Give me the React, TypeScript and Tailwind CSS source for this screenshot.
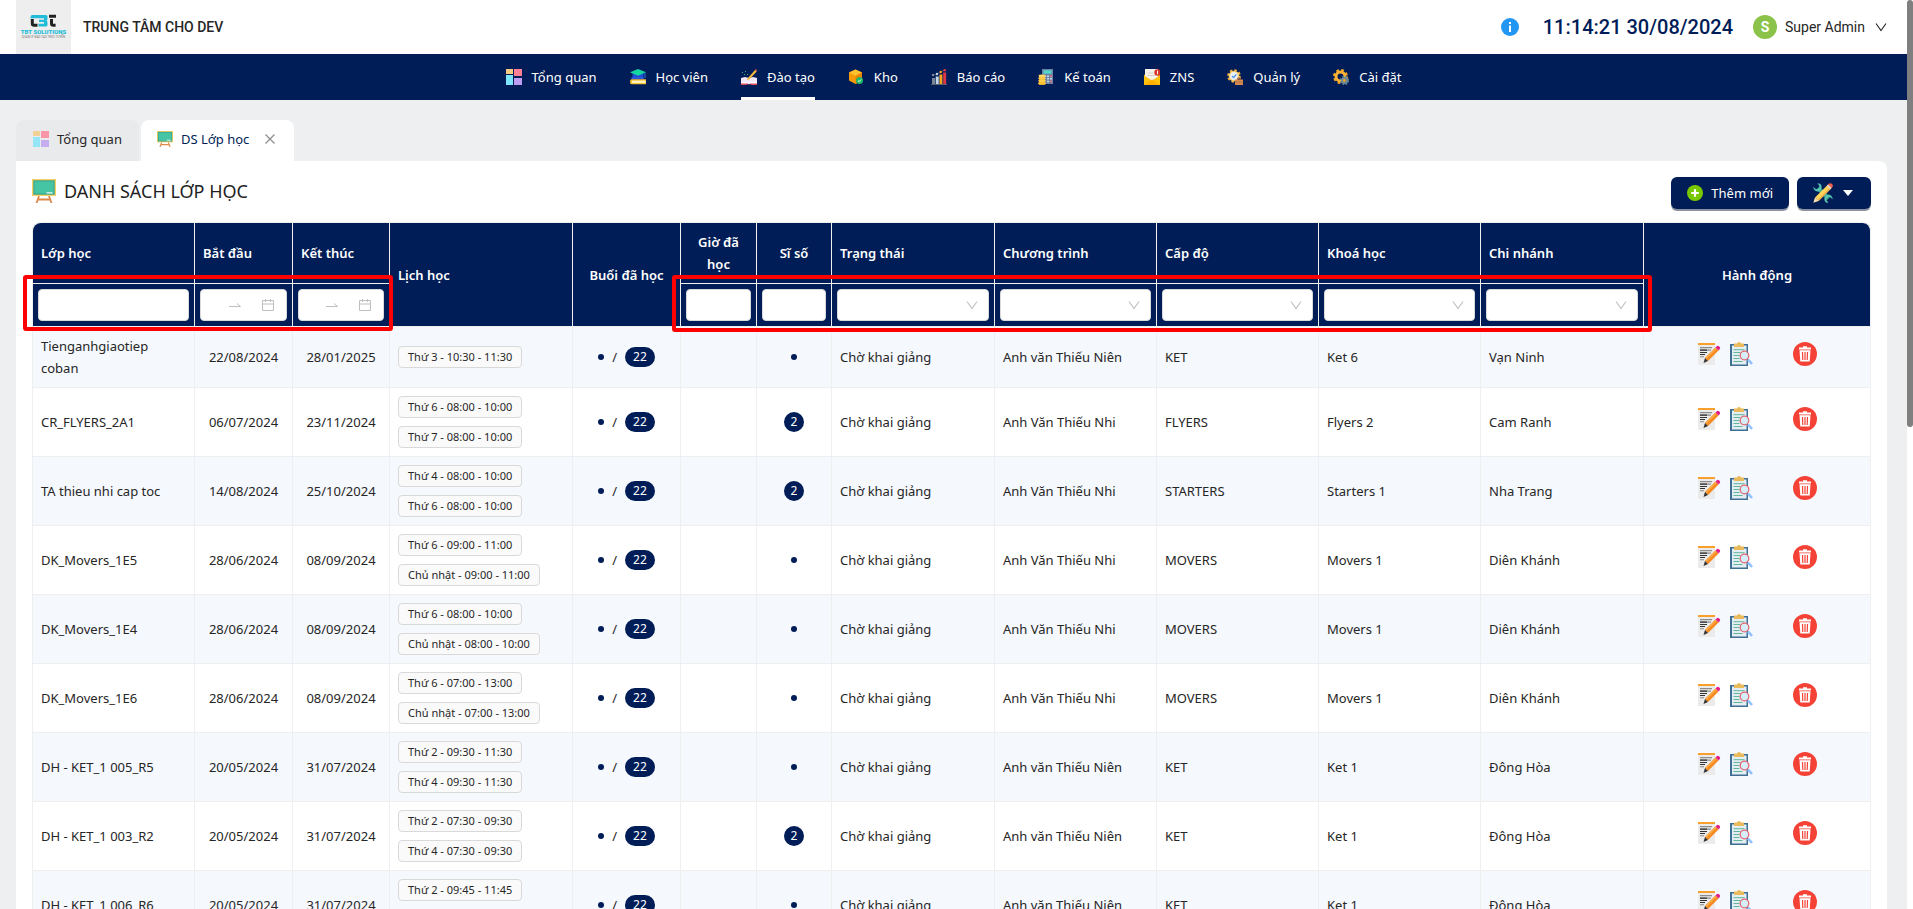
import React, { ReactNode } from "react";

type ClassRow = {
  name: string;
  start: string;
  end: string;
  schedule: string[];
  students?: number;
  program: string;
  level: string;
  course: string;
  branch: string;
};

const rows: ClassRow[] = [
  {
    name: "Tienganhgiaotiep coban",
    start: "22/08/2024",
    end: "28/01/2025",
    schedule: ["Thứ 3 - 10:30 - 11:30"],
    program: "Anh văn Thiếu Niên",
    level: "KET",
    course: "Ket 6",
    branch: "Vạn Ninh",
  },
  {
    name: "CR_FLYERS_2A1",
    start: "06/07/2024",
    end: "23/11/2024",
    schedule: ["Thứ 6 - 08:00 - 10:00", "Thứ 7 - 08:00 - 10:00"],
    students: 2,
    program: "Anh Văn Thiếu Nhi",
    level: "FLYERS",
    course: "Flyers 2",
    branch: "Cam Ranh",
  },
  {
    name: "TA thieu nhi cap toc",
    start: "14/08/2024",
    end: "25/10/2024",
    schedule: ["Thứ 4 - 08:00 - 10:00", "Thứ 6 - 08:00 - 10:00"],
    students: 2,
    program: "Anh Văn Thiếu Nhi",
    level: "STARTERS",
    course: "Starters 1",
    branch: "Nha Trang",
  },
  {
    name: "DK_Movers_1E5",
    start: "28/06/2024",
    end: "08/09/2024",
    schedule: ["Thứ 6 - 09:00 - 11:00", "Chủ nhật - 09:00 - 11:00"],
    program: "Anh Văn Thiếu Nhi",
    level: "MOVERS",
    course: "Movers 1",
    branch: "Diên Khánh",
  },
  {
    name: "DK_Movers_1E4",
    start: "28/06/2024",
    end: "08/09/2024",
    schedule: ["Thứ 6 - 08:00 - 10:00", "Chủ nhật - 08:00 - 10:00"],
    program: "Anh Văn Thiếu Nhi",
    level: "MOVERS",
    course: "Movers 1",
    branch: "Diên Khánh",
  },
  {
    name: "DK_Movers_1E6",
    start: "28/06/2024",
    end: "08/09/2024",
    schedule: ["Thứ 6 - 07:00 - 13:00", "Chủ nhật - 07:00 - 13:00"],
    program: "Anh Văn Thiếu Nhi",
    level: "MOVERS",
    course: "Movers 1",
    branch: "Diên Khánh",
  },
  {
    name: "DH - KET_1 005_R5",
    start: "20/05/2024",
    end: "31/07/2024",
    schedule: ["Thứ 2 - 09:30 - 11:30", "Thứ 4 - 09:30 - 11:30"],
    program: "Anh văn Thiếu Niên",
    level: "KET",
    course: "Ket 1",
    branch: "Đông Hòa",
  },
  {
    name: "DH - KET_1 003_R2",
    start: "20/05/2024",
    end: "31/07/2024",
    schedule: ["Thứ 2 - 07:30 - 09:30", "Thứ 4 - 07:30 - 09:30"],
    students: 2,
    program: "Anh văn Thiếu Niên",
    level: "KET",
    course: "Ket 1",
    branch: "Đông Hòa",
  },
  {
    name: "DH - KET_1 006_R6",
    start: "20/05/2024",
    end: "31/07/2024",
    schedule: ["Thứ 2 - 09:45 - 11:45", "Thứ 4 - 09:45 - 11:45"],
    program: "Anh văn Thiếu Niên",
    level: "KET",
    course: "Ket 1",
    branch: "Đông Hòa",
  },
];

function App() {
  return (
    <div className="flex h-screen overflow-hidden bg-[#eeeff1] font-['Noto_Sans','Open_Sans',sans-serif] text-[13px] leading-[22px] text-[#262626]">
      <div className="flex min-w-0 flex-1 flex-col">
        <TopBar />
        <NavBar />
        <main className="min-h-0 flex-1 overflow-hidden px-4 pt-5 pr-5">
          <PageTabs />
          <ClassList />
        </main>
      </div>
      <div className="w-[6px] shrink-0 bg-white">
        <div className="h-[47%] rounded-full bg-[#7f7f7f]"></div>
      </div>
    </div>
  );
}

export default App;

const TopBar = () => {
  return (
    <header className="flex h-[54px] shrink-0 items-center bg-white pr-5 pl-4 font-[Roboto,sans-serif]">
      <Logo />
      <p className="ml-3 text-sm font-medium">TRUNG TÂM CHO DEV</p>
      <div className="ml-auto flex items-center">
        <button type="button" aria-label="Thông tin">
          <InfoIcon />
        </button>
        <p className="ml-6 text-xl font-medium text-[#001d57]">
          11:14:21 30/08/2024
        </p>
        <button type="button" className="ml-5 flex items-center">
          <span className="flex size-6 items-center justify-center rounded-full bg-[#8bc34a] text-sm font-bold text-white">
            S
          </span>
          <span className="mr-[10px] ml-2 text-sm">Super Admin</span>
          <ChevronDown className="size-3 text-[#262626]" />
        </button>
      </div>
    </header>
  );
};

const NavBar = () => {
  return (
    <nav className="flex h-[46px] shrink-0 justify-center gap-[33px] bg-[#001d57] text-white">
      <NavItem title="Tổng quan" icon={<DashboardIcon />} />
      <NavItem title="Học viên" icon={<StudentIcon />} />
      <NavItem title="Đào tạo" icon={<TrainingIcon />} active />
      <NavItem title="Kho" icon={<StockIcon />} />
      <NavItem title="Báo cáo" icon={<ReportIcon />} />
      <NavItem title="Kế toán" icon={<AccountingIcon />} />
      <NavItem title="ZNS" icon={<MailIcon />} />
      <NavItem title="Quản lý" icon={<ManageIcon />} />
      <NavItem title="Cài đặt" icon={<SettingIcon />} />
    </nav>
  );
};

const NavItem = ({
  title,
  icon,
  active,
}: {
  title: string;
  icon: ReactNode;
  active?: boolean;
}) => {
  return (
    <a
      href="#"
      className={`flex items-center gap-[10px] border-y-[3px] border-t-transparent ${
        active ? "border-b-white" : "border-b-transparent"
      }`}
    >
      {icon}
      <span>{title}</span>
    </a>
  );
};

const PageTabs = () => {
  return (
    <div className="flex gap-[2px]">
      <a
        href="#"
        className="flex h-[41px] items-center gap-2 rounded-t-lg bg-[#e9eaec] px-[17px] pb-[3px]"
      >
        <span className="opacity-80">
          <DashboardIcon />
        </span>
        <span>Tổng quan</span>
      </a>
      <div className="flex h-[41px] items-center rounded-t-lg bg-white pr-[19px] pb-[3px] pl-4">
        <a href="#" className="flex items-center gap-2 text-[#001d57]">
          <BoardIcon className="size-4" />
          <span>DS Lớp học</span>
        </a>
        <button type="button" aria-label="Đóng" className="ml-4">
          <svg viewBox="0 0 10 10" className="size-[10px]">
            <path d="M.5.5l9 9M9.5.5l-9 9" stroke="#8c8c8c" strokeWidth="1.2" />
          </svg>
        </button>
      </div>
    </div>
  );
};

const ClassList = () => {
  return (
    <section className="rounded-tr-lg bg-white p-4">
      <div className="flex items-start justify-between">
        <div className="flex items-center gap-2 pt-[2px]">
          <BoardIcon className="size-6" />
          <h1 className="text-lg leading-6 text-[#1f1f1f]">
            DANH SÁCH LỚP HỌC
          </h1>
        </div>
        <div className="flex gap-2">
          <button
            type="button"
            className="flex h-8 items-center gap-2 rounded-md bg-[#001d57] px-4 text-white shadow-[0_2px_0_#8a909c]"
          >
            <PlusIcon />
            <span>Thêm mới</span>
          </button>
          <button
            type="button"
            aria-label="Công cụ"
            className="flex h-8 w-[74px] items-center gap-[10px] rounded-md bg-[#001d57] px-4 shadow-[0_2px_0_#8a909c]"
          >
            <ToolsIcon />
            <svg viewBox="0 0 10 6" className="h-[6px] w-[10px]">
              <path d="M0 0h10L5 6z" fill="#fff" />
            </svg>
          </button>
        </div>
      </div>
      <div className="relative mt-[13px]">
        <ClassTable />
        <div className="pointer-events-none absolute top-[53px] -left-[9px] h-[56px] w-[20.1%] rounded-[3px] border-4 border-[#fe0000]"></div>
        <div className="pointer-events-none absolute top-[53px] left-[34.8%] h-[57px] w-[53.3%] rounded-[3px] border-4 border-[#fe0000]"></div>
      </div>
    </section>
  );
};

const ClassTable = () => {
  return (
    <table className="w-full table-fixed border-separate border-spacing-0 rounded-t-lg border-t border-l border-[#efeff0]">
      <colgroup>
        <col className="w-[162px]" />
        <col className="w-[98px]" />
        <col className="w-[97px]" />
        <col className="w-[183px]" />
        <col className="w-[108px]" />
        <col className="w-[76px]" />
        <col className="w-[75px]" />
        <col className="w-[163px]" />
        <col className="w-[162px]" />
        <col className="w-[162px]" />
        <col className="w-[162px]" />
        <col className="w-[163px]" />
        <col className="w-[227px]" />
      </colgroup>
      <thead>
        <tr className="h-[61px]">
          <HeadCell className="rounded-tl-lg text-left">Lớp học</HeadCell>
          <HeadCell className="text-left">Bắt đầu</HeadCell>
          <HeadCell className="text-left">Kết thúc</HeadCell>
          <HeadCell className="text-left" rowSpan={2}>
            Lịch học
          </HeadCell>
          <HeadCell className="text-center" rowSpan={2}>
            Buổi đã học
          </HeadCell>
          <HeadCell className="text-center">Giờ đã học</HeadCell>
          <HeadCell className="text-center">Sĩ số</HeadCell>
          <HeadCell className="text-left">Trạng thái</HeadCell>
          <HeadCell className="text-left">Chương trình</HeadCell>
          <HeadCell className="text-left">Cấp độ</HeadCell>
          <HeadCell className="text-left">Khoá học</HeadCell>
          <HeadCell className="text-left">Chi nhánh</HeadCell>
          <HeadCell className="rounded-tr-lg text-center" rowSpan={2}>
            Hành động
          </HeadCell>
        </tr>
        <tr>
          <FilterCell>
            <FilterInput label="Lớp học" />
          </FilterCell>
          <FilterCell>
            <FilterRange label="Bắt đầu" />
          </FilterCell>
          <FilterCell>
            <FilterRange label="Kết thúc" />
          </FilterCell>
          <FilterCell>
            <FilterInput label="Giờ đã học" />
          </FilterCell>
          <FilterCell>
            <FilterInput label="Sĩ số" />
          </FilterCell>
          <FilterCell>
            <FilterSelect label="Trạng thái" />
          </FilterCell>
          <FilterCell>
            <FilterSelect label="Chương trình" />
          </FilterCell>
          <FilterCell>
            <FilterSelect label="Cấp độ" />
          </FilterCell>
          <FilterCell>
            <FilterSelect label="Khoá học" />
          </FilterCell>
          <FilterCell>
            <FilterSelect label="Chi nhánh" />
          </FilterCell>
        </tr>
      </thead>
      <tbody>
        {rows.map((row) => (
          <tr key={row.name} className="odd:bg-[#f5f8fd]">
            <Cell>{row.name}</Cell>
            <Cell className="text-center">{row.start}</Cell>
            <Cell className="text-center">{row.end}</Cell>
            <Cell>
              <div className="flex flex-col items-start gap-2">
                {row.schedule.map((item) => (
                  <span
                    key={item}
                    className="rounded border border-[#d9d9d9] bg-[#fafafa] px-[9px] text-[11px] leading-5"
                  >
                    {item}
                  </span>
                ))}
              </div>
            </Cell>
            <Cell>
              <div className="flex items-center justify-center gap-2">
                <Dot />
                <span>/</span>
                <Count value={22} />
              </div>
            </Cell>
            <Cell />
            <Cell>
              <div className="flex items-center justify-center">
                {row.students ? <Count value={row.students} /> : <Dot />}
              </div>
            </Cell>
            <Cell>Chờ khai giảng</Cell>
            <Cell>{row.program}</Cell>
            <Cell>{row.level}</Cell>
            <Cell>{row.course}</Cell>
            <Cell>{row.branch}</Cell>
            <Cell>
              <div className="flex items-center justify-center pb-[6px]">
                <button type="button" aria-label="Sửa">
                  <EditIcon />
                </button>
                <button type="button" aria-label="Chi tiết" className="ml-2">
                  <DetailIcon />
                </button>
                <button type="button" aria-label="Xoá" className="ml-10">
                  <DeleteIcon />
                </button>
              </div>
            </Cell>
          </tr>
        ))}
      </tbody>
    </table>
  );
};

const HeadCell = ({
  className,
  rowSpan,
  children,
}: {
  className: string;
  rowSpan?: number;
  children: ReactNode;
}) => {
  return (
    <th
      rowSpan={rowSpan}
      className={`border-r border-b border-[#efeff0] bg-[#001d57] px-2 font-semibold text-white ${className}`}
    >
      {children}
    </th>
  );
};

const FilterCell = ({ children }: { children: ReactNode }) => {
  return (
    <th className="border-r border-b border-[#efeff0] bg-[#001d57] p-[5px] font-normal">
      {children}
    </th>
  );
};

const FilterInput = ({ label }: { label: string }) => {
  return (
    <input
      type="text"
      aria-label={label}
      className="block h-8 w-full rounded border border-[#d9d9d9] bg-white px-[11px] text-[#262626] outline-none"
    />
  );
};

const FilterRange = ({ label }: { label: string }) => {
  return (
    <div className="flex h-8 items-center rounded border border-[#d9d9d9] bg-white px-[11px] text-[#262626]">
      <input
        type="text"
        aria-label={`${label} từ ngày`}
        className="w-0 min-w-0 flex-1 outline-none"
      />
      <svg viewBox="0 0 12 12" className="mr-1 size-3 shrink-0">
        <path d="M0 7.5h11.5L8 4.5" fill="none" stroke="#bfbfbf" />
      </svg>
      <input
        type="text"
        aria-label={`${label} đến ngày`}
        className="w-0 min-w-0 flex-1 outline-none"
      />
      <svg viewBox="0 0 14 14" className="size-[14px] shrink-0">
        <path
          d="M1.5 2.5h11v10h-11zM1.5 6h11M4.5 1v3M9.5 1v3"
          fill="none"
          stroke="#bfbfbf"
        />
      </svg>
    </div>
  );
};

const FilterSelect = ({ label }: { label: string }) => {
  return (
    <div className="relative">
      <select
        aria-label={label}
        className="block h-8 w-full appearance-none rounded border border-[#d9d9d9] bg-white px-[11px] text-[#262626] outline-none"
      ></select>
      <ChevronDown className="pointer-events-none absolute top-[10px] right-[11px] size-3 text-[#bfbfbf]" />
    </div>
  );
};

const Cell = ({
  className = "",
  children,
}: {
  className?: string;
  children?: ReactNode;
}) => {
  return (
    <td className={`border-r border-b border-[#efeff0] p-2 ${className}`}>
      {children}
    </td>
  );
};

const Dot = () => {
  return <span className="size-[6px] rounded-full bg-[#001d57]"></span>;
};

const Count = ({ value }: { value: number }) => {
  return (
    <span
      className={`h-5 rounded-full bg-[#001d57] text-center text-xs leading-5 text-white ${
        value > 9 ? "px-2" : "w-5"
      }`}
    >
      {value}
    </span>
  );
};

const ChevronDown = ({ className }: { className: string }) => {
  return (
    <svg viewBox="0 0 12 12" className={className}>
      <path d="M1 2.5l5 7 5-7" fill="none" stroke="currentColor" strokeWidth="1.1" />
    </svg>
  );
};

const Logo = () => {
  return (
    <svg viewBox="0 0 55 54" className="h-[54px] w-[55px] bg-[#eeeeee]">
      <path d="M16.3 19v4.500q0 1.800 1.800 1.800h3.400" fill="none" stroke="#222" strokeWidth="3" />
      <path d="M15.500 15h14.500q1.500 0 1.500 1.500v2.500q0 1.500-1.200 1.800 1.200.3 1.200 1.800v2.500q0 1.500-1.500 1.500h-7.500v-2.800h5.500v-1.700h-5v-2.400h5v-1.500h-14z" fill="#22bcd8" />
      <path d="M33 16.300h7M35.500 19v4.500q0 1.800 1.800 1.800h2.300" fill="none" stroke="#222" strokeWidth="3" />
      <text
        x="27.500"
        y="34"
        textAnchor="middle"
        fontSize="6"
        fontWeight="900"
        fill="#22bcd8"
      >
        TBT SOLUTIONS
      </text>
      <text x="27.500" y="37.500" textAnchor="middle" fontSize="3" fill="#777">
        QUẢN LÝ ĐÀO TẠO TRỰC TUYẾN
      </text>
    </svg>
  );
};

const InfoIcon = () => {
  return (
    <svg viewBox="0 0 18 18" className="size-[18px]">
      <circle cx="9" cy="9" r="9" fill="#2196f3" />
      <path d="M8 4h2v2H8zM8 7.5h2V14H8z" fill="#fff" />
    </svg>
  );
};

const PlusIcon = () => {
  return (
    <svg viewBox="0 0 16 16" className="size-4">
      <circle cx="8" cy="8" r="8" fill="#78c800" />
      <path d="M8 4.2v7.6M4.2 8h7.6" stroke="#fff" strokeWidth="2.2" />
    </svg>
  );
};

const ToolsIcon = () => {
  return (
    <svg viewBox="0 0 20 20" className="size-5">
      <path d="M5 5l10.500 10.500" stroke="#37a895" strokeWidth="4" />
      <path
        d="M4.500.3Q8 .3 8.600 3.500q.2 1.800-.8 3.200L6.200 8.400Q3.800 9 2 7.600.3 6.200.3 3.800l2.700 2.400 2.700-.7.700-2.600z"
        fill="#56c2b0"
      />
      <path
        d="M15.500 19.900q-3.500 0-4.100-3.200-.2-1.800.8-3.200l1.600-1.700q2.400-.6 4.200.8 1.700 1.400 1.700 3.800L17 14l-2.700.7-.7 2.600z"
        fill="#56c2b0"
      />
      <path d="M2 14.500L14.300 2.200l3.600 3.600L5.600 18.100z" fill="#ffd45a" />
      <path d="M4.400 16.900L16.700 4.600l1.200 1.200L5.600 18.100z" fill="#f2b250" />
      <path d="M2 14.500L.3 19.800l5.300-1.700z" fill="#fbe3b6" />
      <path d="M14.900 1.600L16 .6q1.200-.9 2.400 0l1 1q1 1.200 0 2.500l-.9 1.100z" fill="#f0614c" />
      <path d="M13.900 2.600l1.100-1.100 3.600 3.600-1.100 1.100z" fill="#e8dcd8" />
    </svg>
  );
};

const BoardIcon = ({ className }: { className: string }) => {
  return (
    <svg viewBox="0 0 24 24" className={className}>
      <path d="M7 17L4.5 24M17 17l2.5 7M6 20.5h12" stroke="#e0894a" strokeWidth="1.8" />
      <path d="M0 0h24v17H0z" fill="#f7cf63" />
      <path d="M1.300 1.300h21.400v14.400H1.300z" fill="#36a58e" />
      <path d="M2.500 2.500h19v12h-19z" fill="#45c5a3" />
      <path d="M14.500 13h6v1.700h-6z" fill="#c6ece1" />
    </svg>
  );
};

const DashboardIcon = () => {
  return (
    <svg viewBox="0 0 16 16" className="size-4">
      <path d="M0 0h7v5H0z" fill="#f5cb82" />
      <path d="M8 0h8v7H8z" fill="#ff7f96" />
      <path d="M0 6h7v10H0z" fill="#7fe5fc" />
      <path d="M8 9h8v7H8z" fill="#be9ef2" />
    </svg>
  );
};

const StudentIcon = () => {
  return (
    <svg viewBox="0 0 16 16" className="size-4">
      <path d="M2.500 4h11v5.500h-11z" fill="#1f4fd1" />
      <path d="M8 0l8 3.300-8 3.400-8-3.400z" fill="#14d6a2" />
      <path d="M15 4v5" stroke="#2f74e8" strokeWidth="1" />
      <path d="M1.500 8h12v2.300h-12z" fill="#2f55dd" />
      <path d="M1.500 10.300H16v5H1.500Q0 15.300 0 12.800t1.500-2.500z" fill="#f7c531" />
      <path d="M2 11.700h13.500v2.200H2z" fill="#fff3c7" />
    </svg>
  );
};

const TrainingIcon = () => {
  return (
    <svg viewBox="0 0 16 16" className="size-4">
      <path d="M0 9l4-1 4 1 4-1 4 1v6H0z" fill="#f3e6f7" />
      <path d="M0 13.500l4 .8 4-.8 4 .8 4-.8V16h-5l-3-1-3 1H0z" fill="#e2475a" />
      <path d="M0 12.500h7l1 1 1-1h7v2H9l-1 1-1-1H0z" fill="#fbf5fd" />
      <path d="M6.500 9.500L14 1l1.700 1.500L8.300 10.500 6 11z" fill="#f6b73c" />
      <path d="M14 1l.9-1L16 1.300l-.6 1.300z" fill="#ef5a4c" />
      <path d="M1 3h1v1H1zM4 2h1v1H4zM3 5h1v1H3zM6 5h1v1H6z" fill="#3fae6a" />
    </svg>
  );
};

const StockIcon = () => {
  return (
    <svg viewBox="0 0 16 16" className="size-4">
      <path d="M7.500.5L14 3.500v8l-6.500 3.500L1 11.500v-8z" fill="#f79a0a" />
      <path d="M7.500.5L14 3.500 7.500 7 1 3.500z" fill="#ffc12e" />
      <path d="M7.500 7L14 3.500v8L7.500 15z" fill="#ee8300" />
      <circle cx="11.5" cy="11.5" r="3.5" fill="#1fb866" />
      <path d="M9.900 11.500l1.200 1.200 2-2.200" fill="none" stroke="#fff" strokeWidth="1" />
    </svg>
  );
};

const ReportIcon = () => {
  return (
    <svg viewBox="0 0 16 16" className="size-4">
      <path d="M1 9h3v6H1z" fill="#7d8794" />
      <path d="M4.700 7.500h3V15h-3z" fill="#c3d7e6" />
      <path d="M8.400 5.500h3V15h-3z" fill="#f5a623" />
      <path d="M12.200 3.500h3V15h-3z" fill="#dd3647" />
      <path d="M0 15h16v1H0z" fill="#59616e" />
      <path d="M2 6.500l4-1.500 3.500-2L13.500 1" fill="none" stroke="#5c6b80" strokeWidth=".8" />
      <circle cx="2" cy="6" r="1.2" fill="#7d8794" />
      <circle cx="6" cy="5" r="1.2" fill="#c3d7e6" />
      <circle cx="9.7" cy="3" r="1.2" fill="#f5a623" />
      <circle cx="13.700" cy="1.300" r="1.300" fill="#dd3647" />
    </svg>
  );
};

const AccountingIcon = () => {
  return (
    <svg viewBox="0 0 16 16" className="size-4">
      <path d="M4 0h11v15H4z" fill="#6c82a3" />
      <path d="M5.500 1.300h8v3.400h-8z" fill="#52d6cc" />
      <path d="M6 6.500h2v1.500H6zM9 6.500h2v1.500H9zM9 9h2v1.500H9zM9 11.700h2v1.500H9zM12 9h2v1.500h-2z" fill="#c9d5e8" />
      <path d="M12 6.500h2v1.500h-2zM12 11.700h2v1.500h-2z" fill="#ef6f7c" />
      <path d="M1 6.500h6v9H1z" fill="#f3a72f" />
      <ellipse cx="4" cy="6.800" rx="3.500" ry="1.400" fill="#ffd766" />
      <ellipse cx="4" cy="9.300" rx="3.800" ry="1.200" fill="#ffcd4a" />
      <ellipse cx="4" cy="11.800" rx="3.800" ry="1.200" fill="#ffcd4a" />
      <ellipse cx="4" cy="14.400" rx="4" ry="1.300" fill="#ffc235" />
    </svg>
  );
};

const MailIcon = () => {
  return (
    <svg viewBox="0 0 16 16" className="size-4">
      <path d="M0 6l3-2h10l3 2v10H0z" fill="#f5a500" />
      <path d="M1 0h13v13H1z" fill="#f6f1ea" />
      <path d="M3.500 4h6M3.500 6.500h8" stroke="#d6d0ca" strokeWidth="1" />
      <path d="M0 6.500l8 5 8-5V16H0z" fill="#ffc20e" />
      <path d="M0 16l8-5.500 8 5.500z" fill="#ffb000" />
      <circle cx="13.500" cy="3.500" r="3.200" fill="#d8362a" />
      <path d="M13.500 1.700v3.600" stroke="#fff" strokeWidth="1" />
    </svg>
  );
};

const ManageIcon = () => {
  return (
    <svg viewBox="0 0 16 16" className="size-4">
      <circle cx="7" cy="7" r="5.800" fill="none" stroke="#f3b33d" strokeWidth="2" strokeDasharray="2.500 2" />
      <circle cx="7" cy="7" r="5.300" fill="#f9cd6b" />
      <circle cx="7" cy="7" r="3.900" fill="#e8f2fb" />
      <path d="M5 7l1.700 1.700L9.300 5.300" fill="none" stroke="#4a8fe0" strokeWidth="1.200" />
      <path d="M8 10.500h8V16H8z" fill="#d58a52" />
      <path d="M10.500 10.500V9h3v1.500" fill="none" stroke="#a9653a" strokeWidth="1" />
      <path d="M8 12.700h8v.7H8z" fill="#a9653a" />
    </svg>
  );
};

const SettingIcon = () => {
  return (
    <svg viewBox="0 0 16 16" className="size-4">
      <circle cx="7.500" cy="7.500" r="6.500" fill="none" stroke="#f5a623" strokeWidth="2" strokeDasharray="2.800 2.300" />
      <circle cx="7.500" cy="7.500" r="4.500" fill="none" stroke="#f9b233" strokeWidth="3" />
      <circle cx="11.500" cy="11.500" r="4" fill="none" stroke="#5f7d8c" strokeWidth="1.400" strokeDasharray="1.800 1.400" />
      <circle cx="11.500" cy="11.500" r="2.400" fill="none" stroke="#6c8b99" strokeWidth="2.400" />
      <circle cx="11.500" cy="11.500" r="1.200" fill="#f5a623" />
    </svg>
  );
};

const EditIcon = () => {
  return (
    <svg viewBox="0 0 24 24" className="size-6">
      <path d="M1 1h17v22H1z" fill="#ebebeb" />
      <path d="M1 1h17v2H1z" fill="#f9a02c" />
      <path d="M3 5.700h12M3 8.200h11" stroke="#8d8d8d" strokeWidth="1.200" />
      <path d="M3 8.200h7M3 10.500h7M3 12.500h5" stroke="#333" strokeWidth="1.200" />
      <path d="M3 14.700h4" stroke="#9a9a9a" strokeWidth="1.200" />
      <path d="M8 16L18.500 5.500l3 3L11 19z" fill="#f68a1f" />
      <path d="M8 16L18.500 5.500l1.200 1.200L9.300 17.300z" fill="#fba944" />
      <path d="M8 16l3 3-4.500 2z" fill="#333" />
      <path d="M18.500 5.500L20 4q1-.8 2 .2l.8.8q.8 1 0 2L21.500 8.500z" fill="#e0218a" />
    </svg>
  );
};

const DetailIcon = () => {
  return (
    <svg viewBox="0 0 24 24" className="size-6">
      <path d="M1 2h18v22H1z" fill="#3f6f93" />
      <path d="M3 3.500h14.500v19H3z" fill="#e2edf4" />
      <path d="M4.500 7.700h11M4.500 10.500h7M4.500 13.500h6M4.500 16.500h6M4.500 19.500h9" stroke="#63b597" strokeWidth="1" />
      <path d="M5 1.500h3Q8 0 10 0t2 1.500h3V5H5z" fill="#eabb5c" />
      <path d="M19 17.500l4 4.500" stroke="#8fc0ff" strokeWidth="2.600" />
      <circle cx="15.500" cy="13.500" r="4.300" fill="#d5eef8" stroke="#e26a74" strokeWidth="1.300" />
    </svg>
  );
};

const DeleteIcon = () => {
  return (
    <svg viewBox="0 0 24 24" className="size-6">
      <circle cx="12" cy="12" r="12" fill="#f44336" />
      <path d="M6 5.500h12v2H6zM10 4.300h4v1.200h-4z" fill="#fff" />
      <path d="M6.500 8.300h11L16.700 19.500H7.300z" fill="#fff" />
      <path d="M9.500 10l.3 8M12 10v8M14.500 10l-.3 8" stroke="#f44336" strokeWidth="1.200" />
    </svg>
  );
};
